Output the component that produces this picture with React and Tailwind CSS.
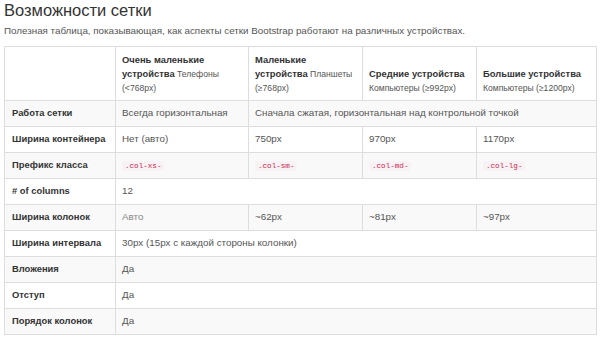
const rows = [
  { label: 'Работа сетки', cells: [{ text: 'Всегда горизонтальная' }, { text: 'Сначала сжатая, горизонтальная над контрольной точкой', span: 3 }] },
  { label: 'Ширина контейнера', cells: [{ text: 'Нет (авто)' }, { text: '750px' }, { text: '970px' }, { text: '1170px' }] },
  { label: 'Префикс класса', cells: [{ code: '.col-xs-' }, { code: '.col-sm-' }, { code: '.col-md-' }, { code: '.col-lg-' }] },
  { label: '# of columns', cells: [{ text: '12', span: 4 }] },
  { label: 'Ширина колонок', cells: [{ text: 'Авто', muted: true }, { text: '~62px' }, { text: '~81px' }, { text: '~97px' }] },
  { label: 'Ширина интервала', cells: [{ text: '30px (15px с каждой стороны колонки)', span: 4 }] },
  { label: 'Вложения', cells: [{ text: 'Да', span: 4 }] },
  { label: 'Отступ', cells: [{ text: 'Да', span: 4 }] },
  { label: 'Порядок колонок', cells: [{ text: 'Да', span: 4 }] },
]

const headers = [
  { title: 'Очень маленькие устройства', sub: 'Телефоны', note: '(<768px)' },
  { title: 'Маленькие устройства', sub: 'Планшеты', note: '(≥768px)' },
  { title: 'Средние устройства', note: 'Компьютеры (≥992px)' },
  { title: 'Большие устройства', note: 'Компьютеры (≥1200px)' },
]

export default function App() {
  return (
    <div className="bg-white w-[603px] h-[339px] overflow-hidden px-[4px] pt-0 text-[#333] font-['Liberation_Sans',Arial,sans-serif]">
      <h2 className="text-[16.5px] leading-[20px] text-[#333]">Возможности сетки</h2>
      <p className="text-[9.8px] leading-[14px] mt-[4px] text-[#555]">
        Полезная таблица, показывающая, как аспекты сетки Bootstrap работают на различных устройствах.
      </p>
      <table className="mt-[8px] w-[592px] border-collapse border border-[#ddd] text-[9.8px] table-fixed">
        <colgroup>
          <col className="w-[111px]" />
          <col className="w-[133px]" />
          <col className="w-[114px]" />
          <col className="w-[114px]" />
          <col className="w-[120px]" />
        </colgroup>
        <thead>
          <tr className="h-[54px]">
            <th className="border border-[#ddd]"></th>
            {headers.map(h => (
              <th key={h.title} className="border border-[#ddd] px-[6px] pb-[5px] align-bottom text-left font-bold text-[9.4px] leading-[14px] text-[#333]">
                {h.title}
                {h.sub && <span className="font-normal text-[8.6px] text-[#555]"> {h.sub}</span>}
                <br />
                <span className="font-normal text-[8.6px] text-[#555]">{h.note}</span>
              </th>
            ))}
          </tr>
        </thead>
        <tbody>
          {rows.map((r, i) => (
            <tr key={r.label} className={`h-[26px] ${i % 2 === 0 ? 'bg-[#f9f9f9]' : 'bg-white'}`}>
              <th className="border border-[#ddd] pl-[7px] pr-[4px] text-left font-bold text-[9.4px] text-[#333] whitespace-nowrap">{r.label}</th>
              {r.cells.map((c, j) => (
                <td key={j} colSpan={c.span || 1} className={`border border-[#ddd] px-[6px] ${c.muted ? 'text-[#888]' : 'text-[#555]'}`}>
                  {c.code ? (
                    <code className="font-['Liberation_Mono',monospace] text-[7.6px] text-[#c7254e] bg-[#f9f2f4] px-[3px] py-[1px] rounded-[3px]">{c.code}</code>
                  ) : c.text}
                </td>
              ))}
            </tr>
          ))}
        </tbody>
      </table>
    </div>
  )
}
